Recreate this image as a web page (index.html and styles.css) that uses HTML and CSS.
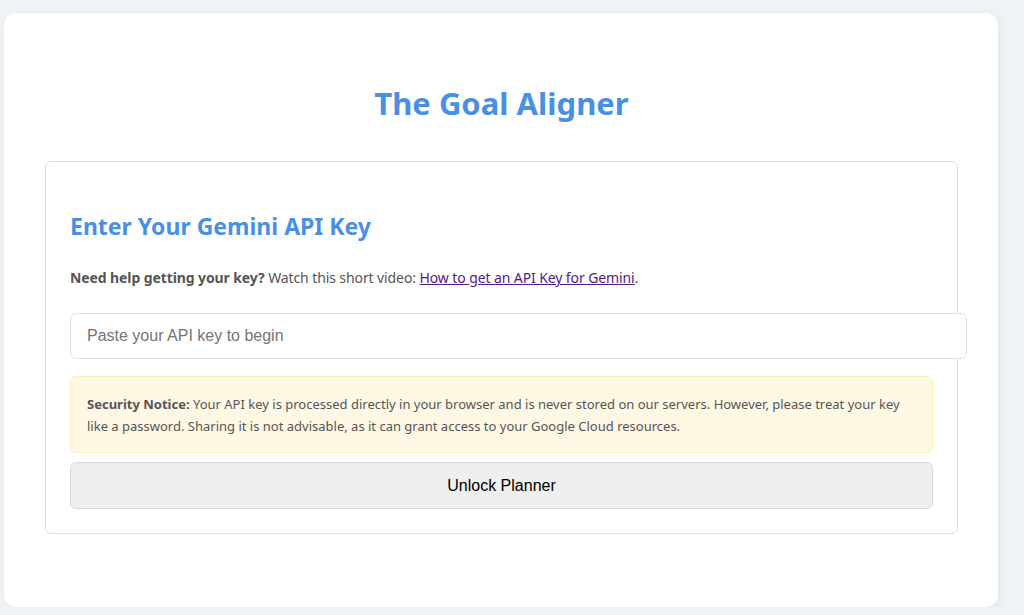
FILE: index.html
```html
<!DOCTYPE html>
<html lang="en">
<head>
<meta charset="UTF-8">
<title>The Goal Aligner</title>
<link rel="stylesheet" href="styles.css">
</head>
<body>
<div class="container">
	<h1>The Goal Aligner</h1>
	<div class="card">
		<h2>Enter Your Gemini API Key</h2>
		<p class="help"><b>Need help getting your key?</b> Watch this short video: <a href="#video">How to get an API Key for Gemini</a>.</p>
		<input type="password" class="key-input" placeholder="Paste your API key to begin">
		<div class="notice">
			<b>Security Notice:</b> Your API key is processed directly in your browser and is never stored on our servers. However, please treat your key like a password. Sharing it is not advisable, as it can grant access to your Google Cloud resources.
		</div>
		<button class="unlock">Unlock Planner</button>
	</div>
</div>
</body>
</html>
```

FILE: styles.css
```css
body {
	background-color: #f0f3f6;
	font-family: "Noto Sans", "Open Sans", Arial, sans-serif;
	margin: 0;
	padding: 13px 0 0 4px;
	color: #555;
}

.container {
	width: 913px;
	background-color: #fff;
	border-radius: 12px;
	padding: 30px 40px 73px 41px;
	box-shadow: 2px 2px 10px rgba(0, 0, 0, 0.06);
}

h1 {
	font-size: 31px;
	line-height: 41px;
	color: #4a90e2;
	text-align: center;
	margin: 40px 0 37px 0;
}

.card {
	border: 1px solid #dde1e7;
	border-radius: 6px;
	padding: 24px;
}

h2 {
	font-size: 23px;
	line-height: 33px;
	color: #4a90e2;
	margin: 24px 0 25px 0;
}

.help {
	font-size: 14px;
	line-height: 19px;
	letter-spacing: -0.1px;
	margin: 0 0 26px 0;
}

.help a {
	color: #551a8b;
}

.key-input {
	display: block;
	width: 100%;
	height: 44px;
	padding: 0 16px;
	border: 1px solid #dde1e7;
	border-radius: 6px;
	font-family: "Liberation Sans", Arial, sans-serif;
	font-size: 16px;
	margin: 0 0 17px 0;
}

.key-input::placeholder {
	color: #757575;
}

.notice {
	background-color: #fff8e5;
	border: 1px solid #ffeebb;
	border-radius: 6px;
	padding: 16px 16px 15px 16px;
	font-size: 13px;
	line-height: 22px;
	margin-bottom: 9px;
}

.unlock {
	display: block;
	width: 100%;
	height: 47px;
	background-color: #efefef;
	border: 1px solid #d5dae1;
	border-radius: 6px;
	font-family: "Liberation Sans", Arial, sans-serif;
	font-size: 16px;
	color: #000;
}
```
